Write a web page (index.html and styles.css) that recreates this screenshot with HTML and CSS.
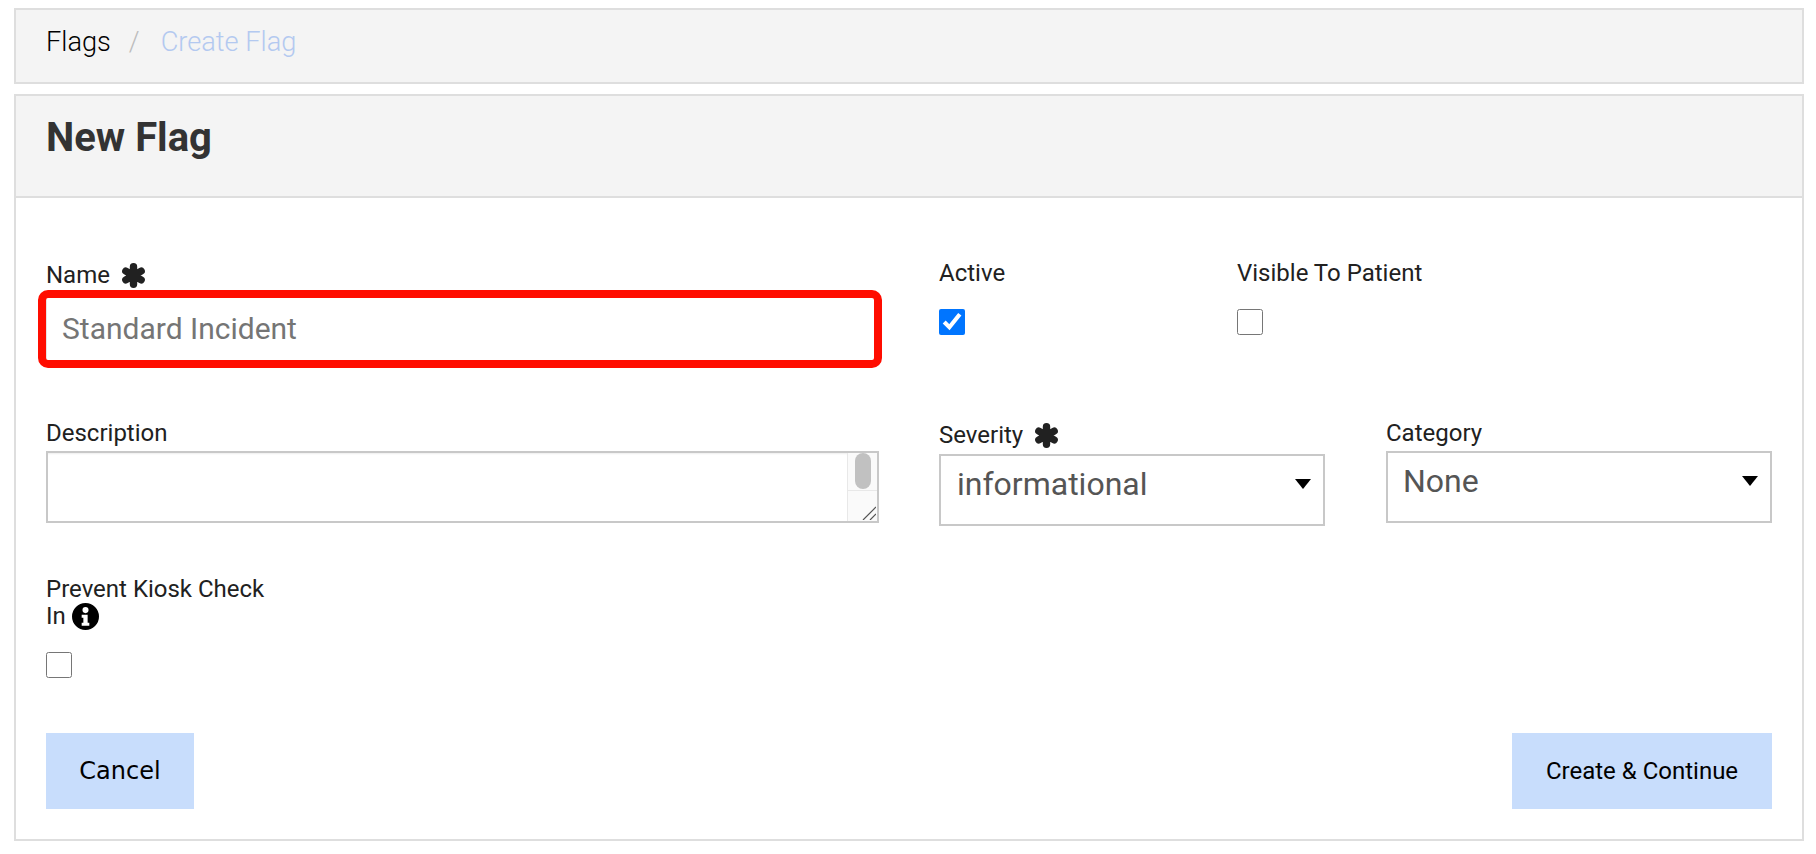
FILE: index.html
```html
<!DOCTYPE html>
<html lang="en">
<head>
<meta charset="utf-8">
<title>New Flag</title>
<link rel="stylesheet" href="styles.css">
</head>
<body>
<nav class="crumbs">
  <a class="crumb-link">Flags</a>
  <span class="crumb-sep">/</span>
  <span class="crumb-current">Create Flag</span>
</nav>
<main class="panel">
  <header class="panel-head"><h1>New Flag</h1></header>
  <form class="form">
    <div class="row row-one">
      <div class="col-wide">
        <label class="label">Name <svg class="req" viewBox="0 0 24 24"><path d="M12 4.2v15.6M5.2 8.1l13.6 7.8M18.8 8.1 5.2 15.9"/></svg></label>
        <div class="name-wrap">
          <input class="input" type="text" placeholder="Standard Incident">
          <span class="highlight"></span>
        </div>
      </div>
      <div class="col-check col-active">
        <label class="label">Active</label>
        <input class="check" type="checkbox" checked>
      </div>
      <div class="col-check">
        <label class="label">Visible To Patient</label>
        <input class="check" type="checkbox">
      </div>
    </div>
    <div class="row row-two">
      <div class="col-wide">
        <label class="label">Description</label>
        <div class="textarea-box">
          <textarea class="textarea"></textarea>
          <div class="scroll">
            <div class="scroll-track"><span class="scroll-thumb"></span></div>
            <div class="scroll-corner"><svg viewBox="0 0 14 14" class="grip"><path d="M1 14 14 1M8 14l6-6"/></svg></div>
          </div>
        </div>
      </div>
      <div class="col-severity">
        <label class="label">Severity <svg class="req" viewBox="0 0 24 24"><path d="M12 4.2v15.6M5.2 8.1l13.6 7.8M18.8 8.1 5.2 15.9"/></svg></label>
        <div class="select"><span>informational</span></div>
      </div>
      <div class="col-category">
        <label class="label">Category</label>
        <div class="select"><span>None</span></div>
      </div>
    </div>
    <div class="row-three">
      <label class="label label-wrap">Prevent Kiosk Check In <svg class="info" viewBox="0 0 24 24"><path fill-rule="evenodd" d="M12 0a12 12 0 1 1 0 24 12 12 0 0 1 0-24zM12 3.6a2.7 2.7 0 1 0 0 5.4 2.7 2.7 0 0 0 0-5.4zM8.6 10.4v2.6h1.5v4.6H8.6v2.7h6.8v-2.7h-1.5v-7.2z"/></svg></label>
      <input class="check" type="checkbox">
    </div>
    <div class="actions">
      <button class="btn btn-cancel" type="button">Cancel</button>
      <button class="btn btn-create" type="button">Create &amp; Continue</button>
    </div>
  </form>
</main>
</body>
</html>
```

FILE: styles.css
```css
* { box-sizing: border-box; }
html, body { margin: 0; background: #fff; }
body {
  padding: 8px 12px 0 14px;
  font-family: Roboto, "Liberation Sans", sans-serif;
  color: #212121;
}
.crumbs {
  height: 76px;
  display: flex;
  align-items: center;
  padding: 0 30px 8px;
  background: #f4f4f4;
  border: 2px solid #dedede;
  font-size: 27.2px;
  font-weight: 300;
}
.crumb-link { color: #000; }
.crumb-sep { color: #bdbdbd; margin: 0 21px 0 18px; }
.crumb-current { color: #b3c9f0; }
.panel {
  margin-top: 10px;
  height: 747px;
  border: 2px solid #dedede;
  background: #fff;
}
.panel-head {
  height: 102px;
  background: #f4f4f4;
  border-bottom: 2px solid #dedede;
  padding: 20px 30px 0;
}
.panel-head h1 {
  margin: 0;
  font-size: 40px;
  line-height: 44px;
  font-weight: 700;
  color: #333;
}
.form { padding: 0 30px; }
.row { display: flex; align-items: flex-start; }
.row-one { padding-top: 64px; height: 221px; }
.row-two { padding-top: 1px; height: 156px; }
.col-wide { width: 833px; margin-right: 60px; flex: none; }
.col-active { width: 298px; flex: none; }
.col-severity { width: 386px; margin-right: 61px; flex: none; }
.col-category { width: 386px; flex: none; }
.label {
  display: block;
  font-size: 24px;
  line-height: 27px;
  color: #212121;
}
.req {
  width: 27px;
  height: 27px;
  margin: -4px 0 -4px 4px;
  fill: none;
  stroke: #212121;
  stroke-width: 6.6;
  stroke-linecap: round;
  vertical-align: -2px;
  overflow: visible;
}
.col-check .label { margin-top: -2px; }
.check {
  display: block;
  width: 26px;
  height: 26px;
  margin: 22px 0 0;
  accent-color: #0075ff;
}
.name-wrap { position: relative; margin-top: 9px; }
.input {
  display: block;
  width: 100%;
  height: 62px;
  border: 0;
  border-left: 1px solid #e4e4e4;
  padding: 0 15px 2px;
  font: 400 30px Roboto, sans-serif;
  color: #555;
  background: #fff;
  outline: none;
}
.input::placeholder { color: #757575; opacity: 1; }
.highlight {
  position: absolute;
  left: -8px;
  right: -3px;
  top: -8px;
  bottom: -8px;
  border: 8px solid #ff0d00;
  border-radius: 10px;
  pointer-events: none;
}
.textarea-box {
  display: flex;
  height: 72px;
  margin-top: 4px;
  border: 2px solid #c8c8c8;
}
.textarea {
  flex: 1;
  min-width: 0;
  border: 0;
  resize: none;
  outline: none;
  background: #fff;
  box-shadow: inset 0 2px 2px -1px #eee;
}
.scroll {
  width: 30px;
  flex: none;
  display: flex;
  flex-direction: column;
  background: #fafafa;
  border-left: 1px solid #e8e8e8;
}
.scroll-track { height: 38px; padding: 0 6px 0 7px; border-bottom: 1px solid #e8e8e8; }
.scroll-thumb { display: block; width: 16px; height: 36px; border-radius: 8px; background: #c1c1c1; }
.scroll-corner { flex: 1; display: flex; align-items: flex-end; justify-content: flex-end; padding: 0 1px 1px 0; }
.grip { width: 14px; height: 14px; fill: none; stroke: #555; stroke-width: 1.2; }
.col-severity .label { margin-top: 2px; }
.col-severity .select { margin-top: 5px; }
.select {
  position: relative;
  height: 72px;
  margin-top: 4px;
  padding: 8px 16px 0;
  border: 2px solid #c8c8c8;
  font-size: 32px;
  line-height: 40px;
  color: #555;
  background: #fff;
}
.col-category .select { padding-left: 15px; }
.select::after {
  content: "";
  position: absolute;
  right: 12px;
  top: 23px;
  border-style: solid;
  border-width: 10px 8px 0;
  border-color: #000 transparent transparent;
}
.row-three { width: 240px; height: 158px; padding-top: 1px; }
.label-wrap { width: 230px; }
.info { width: 27px; height: 27px; margin: -3px 0; vertical-align: -3px; fill: #000; }
.row-three .check { margin-top: 22px; }
.actions { display: flex; justify-content: space-between; }
.btn {
  height: 76px;
  border: 0;
  background: #c8ddfc;
  color: #000;
  font: 400 24px Roboto, sans-serif;
  padding: 0;
}
.btn-cancel { width: 148px; font-family: "DejaVu Sans", sans-serif; }
.btn-create { width: 260px; }
```
